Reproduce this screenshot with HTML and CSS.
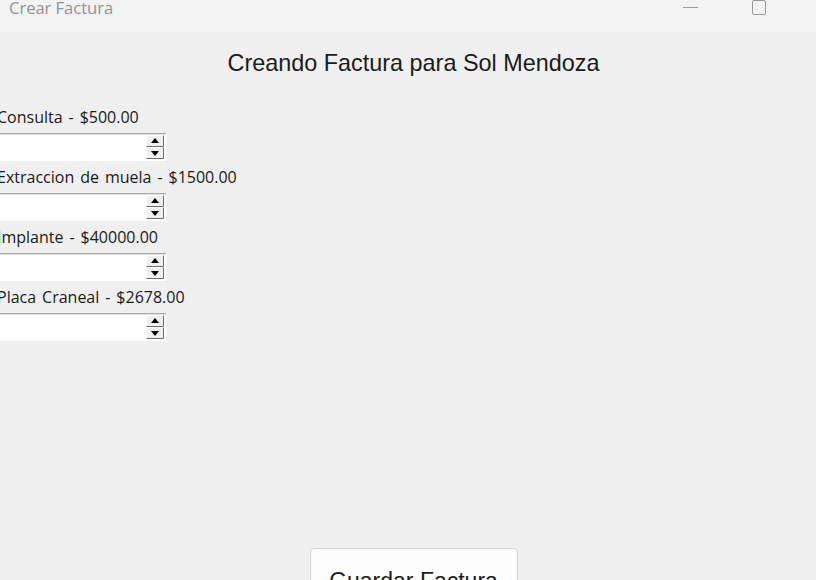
FILE: index.html
```html
<!DOCTYPE html>
<html lang="es">
<head>
<meta charset="utf-8">
<title>Crear Factura</title>
<link rel="stylesheet" href="styles.css">
</head>
<body>
<div class="window">
  <header class="titlebar">
    <span class="title">Crear Factura</span>
    <div class="controls">
      <span class="ctl-min"></span>
      <span class="ctl-max"></span>
    </div>
  </header>
  <main class="content">
    <h1 class="heading">Creando Factura para Sol Mendoza</h1>
    <div class="items">
      <div class="item">
        <label class="item-label">Consulta - $500.00</label>
        <div class="spinbox"><input class="spin-input" type="text"><span class="spin-btns"><svg width="18" height="24" viewBox="0 0 18 24"><rect x="0.5" y="0.5" width="17" height="11" fill="#f0f0f0" stroke="#fff"/><path d="M0.5 11.5H17.5V0.5" fill="none" stroke="#6d6d6d"/><path d="M5 8h8l-4-5z" fill="#000"/><rect x="0.5" y="12.5" width="17" height="11" fill="#f0f0f0" stroke="#fff"/><path d="M0.5 23.5H17.5V12.5" fill="none" stroke="#6d6d6d"/><path d="M5 16h8l-4 5z" fill="#000"/></svg></span></div>
      </div>
      <div class="item">
        <label class="item-label">Extraccion de muela - $1500.00</label>
        <div class="spinbox"><input class="spin-input" type="text"><span class="spin-btns"><svg width="18" height="24" viewBox="0 0 18 24"><rect x="0.5" y="0.5" width="17" height="11" fill="#f0f0f0" stroke="#fff"/><path d="M0.5 11.5H17.5V0.5" fill="none" stroke="#6d6d6d"/><path d="M5 8h8l-4-5z" fill="#000"/><rect x="0.5" y="12.5" width="17" height="11" fill="#f0f0f0" stroke="#fff"/><path d="M0.5 23.5H17.5V12.5" fill="none" stroke="#6d6d6d"/><path d="M5 16h8l-4 5z" fill="#000"/></svg></span></div>
      </div>
      <div class="item">
        <label class="item-label">Implante - $40000.00</label>
        <div class="spinbox"><input class="spin-input" type="text"><span class="spin-btns"><svg width="18" height="24" viewBox="0 0 18 24"><rect x="0.5" y="0.5" width="17" height="11" fill="#f0f0f0" stroke="#fff"/><path d="M0.5 11.5H17.5V0.5" fill="none" stroke="#6d6d6d"/><path d="M5 8h8l-4-5z" fill="#000"/><rect x="0.5" y="12.5" width="17" height="11" fill="#f0f0f0" stroke="#fff"/><path d="M0.5 23.5H17.5V12.5" fill="none" stroke="#6d6d6d"/><path d="M5 16h8l-4 5z" fill="#000"/></svg></span></div>
      </div>
      <div class="item">
        <label class="item-label">Placa Craneal - $2678.00</label>
        <div class="spinbox"><input class="spin-input" type="text"><span class="spin-btns"><svg width="18" height="24" viewBox="0 0 18 24"><rect x="0.5" y="0.5" width="17" height="11" fill="#f0f0f0" stroke="#fff"/><path d="M0.5 11.5H17.5V0.5" fill="none" stroke="#6d6d6d"/><path d="M5 8h8l-4-5z" fill="#000"/><rect x="0.5" y="12.5" width="17" height="11" fill="#f0f0f0" stroke="#fff"/><path d="M0.5 23.5H17.5V12.5" fill="none" stroke="#6d6d6d"/><path d="M5 16h8l-4 5z" fill="#000"/></svg></span></div>
      </div>
    </div>
    <div class="actions">
      <button class="save-btn" type="button">Guardar Factura</button>
    </div>
  </main>
</div>
</body>
</html>
```
FILE: styles.css
```css
html, body {
  margin: 0;
  padding: 0;
}
body {
  width: 816px;
  height: 580px;
  overflow: hidden;
  background: #f0f0f0;
}
.window {
  display: flex;
  flex-direction: column;
}
.titlebar {
  height: 32px;
  background: #f3f3f3;
  display: flex;
  align-items: flex-start;
  justify-content: space-between;
}
.title {
  font-family: "Open Sans", sans-serif;
  font-size: 16.5px;
  line-height: 16px;
  color: #929292;
  margin-left: 9px;
}
.controls {
  display: flex;
  align-items: flex-start;
  margin-right: 50px;
}
.ctl-min {
  width: 15px;
  height: 1px;
  background: #9a9a9a;
  margin-top: 7px;
  margin-right: 54px;
}
.ctl-max {
  width: 12px;
  height: 13px;
  border: 1.5px solid #9a9a9a;
  border-radius: 2px;
  margin-top: 0;
}
.content {
  display: flex;
  flex-direction: column;
}
.heading {
  margin: 18px 0 25px;
  padding-left: 11px;
  font-family: "Liberation Sans", Arial, sans-serif;
  font-size: 23.4px;
  font-weight: normal;
  line-height: 26px;
  color: #1b1b1b;
  text-align: center;
}
.items {
  display: flex;
  flex-direction: column;
  margin-left: -3px;
}
.item {
  display: flex;
  flex-direction: column;
  align-items: flex-start;
}
.item-label {
  height: 32px;
  line-height: 33px;
  font-family: "Open Sans", sans-serif;
  font-size: 16px;
  word-spacing: 1.8px;
  color: #1a1a1a;
  white-space: nowrap;
}
.spinbox {
  width: 169px;
  height: 28px;
  box-sizing: border-box;
  background: #fff;
  border-top: 1px solid #a9a9a9;
  box-shadow: inset 0 1px 0 #e2e2e2;
  display: flex;
  align-items: flex-start;
}
.spin-input {
  flex: 1;
  min-width: 0;
  height: 22px;
  border: none;
  outline: none;
  background: transparent;
  padding: 0;
}
.spin-btns {
  display: flex;
  margin-top: 1px;
  margin-right: 2px;
}
.spin-btns svg {
  display: block;
}
.actions {
  margin-top: 207px;
  padding-left: 11px;
  display: flex;
  justify-content: center;
}
.save-btn {
  width: 208px;
  height: 50px;
  box-sizing: border-box;
  padding: 19px 0 0;
  border: 1px solid #d4d4d4;
  border-radius: 4px;
  background: #fdfdfd;
  font-family: "Liberation Sans", Arial, sans-serif;
  font-size: 23px;
  line-height: 26px;
  color: #1b1b1b;
  display: flex;
  justify-content: center;
  align-items: flex-start;
}
```
